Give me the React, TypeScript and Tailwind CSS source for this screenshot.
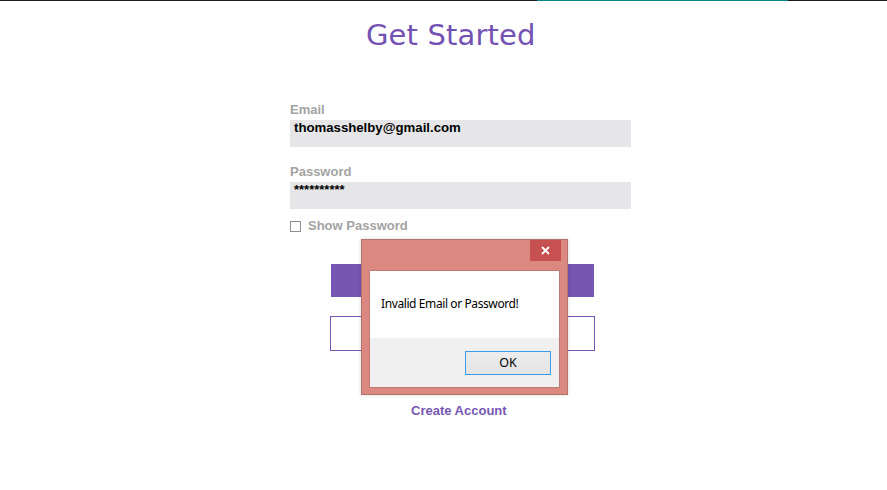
import React from "react";

export default function App() {
  return (
    <div className="relative w-[887px] h-[490px] bg-white overflow-hidden font-['Liberation_Sans',Arial,sans-serif]">
      {/* top strip */}
      <div className="flex h-px bg-[#1d1d1d]">
        <div className="ml-[537px] w-[251px] bg-[#0a8686]" />
      </div>

      {/* title */}
      <h1 className="mt-[20px] ml-[366px] text-[29px] leading-[29px] font-normal text-[#7352b3] font-['DejaVu_Sans',Verdana,sans-serif] tracking-[0.15px]">
        Get Started
      </h1>

      {/* form */}
      <div className="ml-[290px] w-[341px] mt-[52px] flex flex-col">
        <label className="text-[13px] leading-4 font-bold text-[#a3a3a3]">Email</label>
        <div className="mt-[2px] h-[27px] bg-[#e6e6e8] pl-1 text-[13.2px] leading-4 font-bold text-black">
          thomasshelby@gmail.com
        </div>

        <label className="mt-[17px] text-[13px] leading-4 font-bold text-[#a3a3a3]">Password</label>
        <div className="mt-[2px] h-[27px] bg-[#e6e6e8] pl-1 text-[13px] leading-4 font-bold text-black">
          **********
        </div>

        <div className="mt-[9px] flex items-center h-4">
          <div className="w-[11px] h-[11px] border border-[#8f8f8f] bg-white" />
          <span className="ml-[7px] text-[13px] leading-4 font-bold text-[#a3a3a3]">Show Password</span>
        </div>

        <div className="mt-[30px] ml-[41px] w-[263px] h-[33px] bg-[#7556b3]" />
        <div className="mt-[19px] ml-[40px] w-[265px] h-[35px] border border-[#7556b3] bg-white" />

        <div className="mt-[52px] ml-[121px] text-[13px] leading-4 font-bold text-[#7556b3]">
          Create Account
        </div>
      </div>

      {/* dialog overlay */}
      <div className="absolute left-[361px] top-[239px] w-[207px] h-[156px] bg-[#db8980] border border-[#b5716b] shadow-[0_0_4px_rgba(0,0,0,0.15)]">
        <div className="flex justify-end pr-[6px]">
          <div className="w-[31px] h-[21px] bg-[#c75050] flex items-center justify-center">
            <svg width="9" height="9" viewBox="0 0 9 9">
              <path d="M1 1 L8 8 M8 1 L1 8" stroke="white" strokeWidth="1.8" />
            </svg>
          </div>
        </div>
        <div className="mx-[7px] mt-[9px] h-[118px] border border-[#bf7a73] bg-white flex flex-col">
          <div className="h-[67px] bg-white pl-[11px] pt-[25px] text-[12px] leading-4 text-black font-['Noto_Sans',sans-serif] tracking-[-0.4px]">
            Invalid Email or Password!
          </div>
          <div className="flex-1 bg-[#f0f0f0] flex justify-end items-start pt-[13px] pr-[8px]">
            <div className="w-[86px] h-[24px] border border-[#3c9ae8] bg-gradient-to-b from-[#ececec] to-[#e4e4e4] flex items-center justify-center text-[12.5px] text-black font-['Noto_Sans',sans-serif]">
              OK
            </div>
          </div>
        </div>
      </div>
    </div>
  );
}
